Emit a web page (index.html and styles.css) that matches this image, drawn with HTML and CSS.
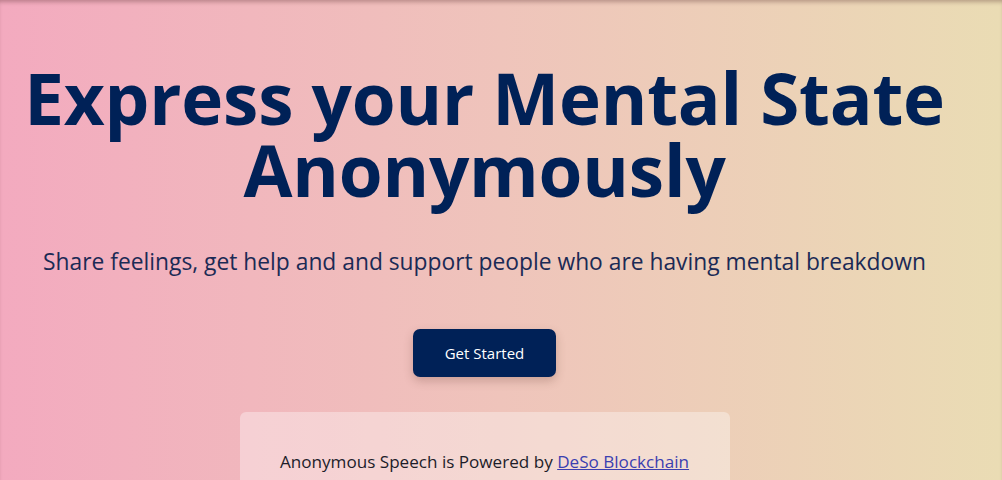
FILE: index.html
```html
<!DOCTYPE html>
<html lang="en">
<head>
<meta charset="utf-8">
<title>Anonymous Speech</title>
<link rel="stylesheet" href="styles.css">
</head>
<body>
<main class="hero">
  <h1 class="hero-title">Express your Mental State Anonymously</h1>
  <p class="hero-sub">Share feelings, get help and and support people who are having mental breakdown</p>
  <a class="btn-start" href="#">Get Started</a>
  <div class="powered">
    <p>Anonymous Speech is Powered by <a href="#">DeSo Blockchain</a></p>
  </div>
</main>
</body>
</html>
```

FILE: styles.css
```css
html, body {
  margin: 0;
  height: 100%;
}
body {
  font-family: "Open Sans", "Noto Sans", sans-serif;
  background: linear-gradient(90deg, #f3aabf 0%, #efc4bb 50%, #eadcb4 100%);
  overflow: hidden;
}
.hero {
  display: flex;
  flex-direction: column;
  align-items: center;
  text-align: center;
  min-height: 100%;
  box-shadow: inset 0 4px 4px -2px rgba(80, 40, 40, 0.35);
  padding: 62px 33px 0 0;
  box-sizing: border-box;
}
.hero-title {
  margin: 0;
  width: 960px;
  font-size: 71px;
  line-height: 72px;
  font-weight: 700;
  color: #002157;
  letter-spacing: -0.2px;
}
.hero-sub {
  margin: 41px 0 0;
  font-size: 22.8px;
  line-height: 30px;
  color: #1b2a55;
}
.btn-start {
  margin-top: 52px;
  width: 143px;
  height: 48px;
  display: flex;
  align-items: center;
  justify-content: center;
  background: #002157;
  color: #fff;
  font-size: 15px;
  text-decoration: none;
  border-radius: 7px;
  box-shadow: 0 4px 10px rgba(90, 50, 40, 0.25);
}
.powered {
  margin-top: 35px;
  width: 490px;
  height: 120px;
  background: rgba(255, 255, 255, 0.35);
  border-radius: 6px;
  box-sizing: border-box;
  padding-top: 38px;
}
.powered p {
  margin: 0;
  font-size: 17.1px;
  color: #1d1d2a;
}
.powered a {
  color: #3b3fb0;
}
```
